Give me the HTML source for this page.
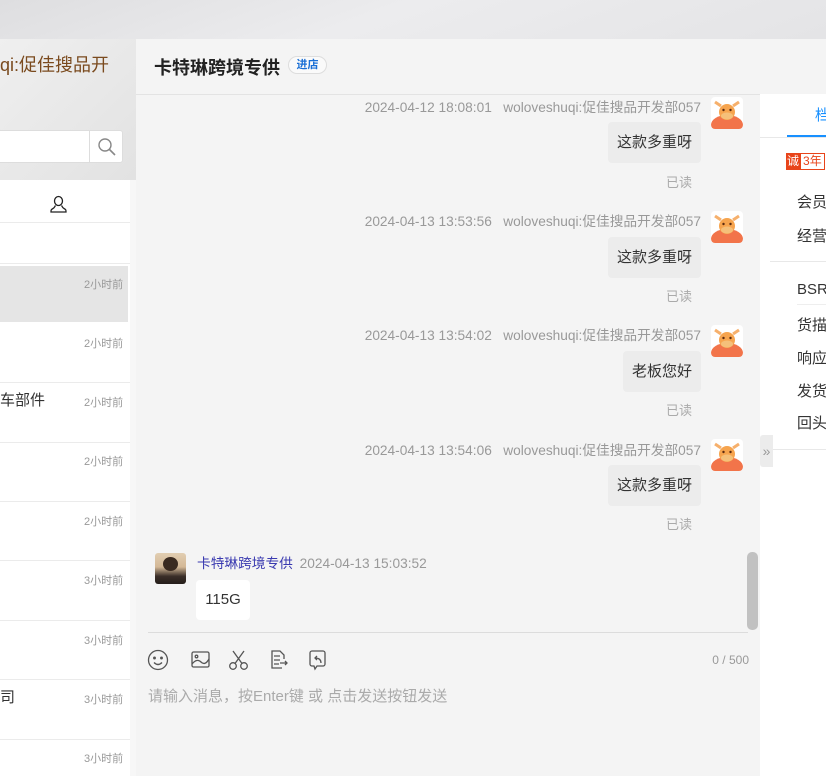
<!DOCTYPE html>
<html><head><meta charset="utf-8"><style>
*{margin:0;padding:0;box-sizing:border-box}
body{width:826px;height:776px;overflow:hidden;position:relative;font-family:"Liberation Sans","Noto Sans CJK SC",sans-serif;background:#e6e6e8}
.a{position:absolute}
.top{left:0;top:0;width:826px;height:39px;background:linear-gradient(160deg,#dedee0 0%,#ececee 45%,#e4e4e6 100%)}
.lh{left:0;top:39px;width:136px;height:141px;background:linear-gradient(135deg,#efefef,#e2e2e2)}
.list{left:0;top:180px;width:136px;height:596px;background:#fff}
.t{font-size:11px;color:#999;right:12px}
.sep{left:0;width:130px;height:1px;background:#ebebeb}
.chat{left:136px;top:39px;width:690px;height:737px;background:#f4f4f4}
.ts{font-size:13.7px;color:#999;right:125px;white-space:nowrap}
.av{width:32px;height:32px;left:711px;border-radius:4px;background:#fff;overflow:hidden}
.bub{background:#ececec;border-radius:4px;font-size:15px;color:#333;height:41px;line-height:41px;padding:0 9px;right:125px}
.rd{font-size:13px;color:#aaa;right:134px}
.rp{left:760px;top:94px;width:66px;height:682px;background:#fff;overflow:hidden}
.rt{font-size:15px;color:#333;left:797px;white-space:nowrap}
</style></head><body>
<div class="a top"></div>
<div class="a lh"></div>
<div class="a" style="left:0;top:51px;font-size:18px;color:#7a4a1e;white-space:nowrap">qi:促佳搜品开</div>
<div class="a" style="left:0;top:130px;width:123px;height:33px;background:#fff;border:1px solid #ddd;border-left:none;border-radius:0 3px 3px 0"></div>
<div class="a" style="left:89px;top:130px;width:1px;height:33px;background:#ddd"></div>
<svg class="a" style="left:97px;top:137px" width="20" height="20" viewBox="0 0 20 20"><circle cx="8" cy="8" r="6" fill="none" stroke="#888" stroke-width="1.4"/><path d="M12.5 12.5L18 18" stroke="#888" stroke-width="1.6"/></svg>
<div class="a list"></div>
<svg class="a" style="left:50px;top:195px" width="17" height="19" viewBox="0 0 17 19"><path d="M8.5 1.5a4 4.5 0 1 1 0 9a4 4.5 0 1 1 0-9zM5.5 10.5c-1 1-.5 2-2.5 3s-2 1.5-2 3.5h15c0-2 0-2.5-2-3.5s-1.5-2-2.5-3" fill="none" stroke="#222" stroke-width="1.3"/></svg>
<div class="a sep" style="top:222px"></div>
<div class="a t" style="top:212px;color:#bbb;height:10px;overflow:hidden">1小时前</div>
<div class="a" style="left:130px;top:244px;width:5px;height:15px;background:#ddd;border-radius:3px"></div>
<div class="a sep" style="top:263px"></div>
<div class="a" style="left:0;top:266px;width:128px;height:56px;background:#e5e5e5"></div>
<div class="a t" style="top:276px;left:84px">2小时前</div>
<div class="a t" style="top:335px;left:84px">2小时前</div>
<div class="a sep" style="top:382px"></div>
<div class="a" style="left:0;top:389px;font-size:15px;color:#333">车部件</div>
<div class="a t" style="top:394px;left:84px">2小时前</div>
<div class="a sep" style="top:442px"></div>
<div class="a t" style="top:453px;left:84px">2小时前</div>
<div class="a sep" style="top:501px"></div>
<div class="a t" style="top:513px;left:84px">2小时前</div>
<div class="a sep" style="top:560px"></div>
<div class="a t" style="top:572px;left:84px">3小时前</div>
<div class="a sep" style="top:620px"></div>
<div class="a t" style="top:632px;left:84px">3小时前</div>
<div class="a sep" style="top:679px"></div>
<div class="a" style="left:0;top:686px;font-size:15px;color:#333">司</div>
<div class="a t" style="top:691px;left:84px">3小时前</div>
<div class="a sep" style="top:739px"></div>
<div class="a t" style="top:750px;left:84px">3小时前</div>
<div class="a" style="left:130px;top:180px;width:6px;height:596px;background:#f7f7f7"></div>

<div class="a chat"></div>
<div class="a" style="left:136px;top:94px;width:690px;height:1px;background:#e3e3e3"></div>
<div class="a" style="left:154px;top:54px;font-size:18px;font-weight:bold;color:#222">卡特琳跨境专供</div>
<div class="a" style="left:288px;top:56px;width:39px;height:18px;border:1px solid #ddd;border-radius:9px;background:#fafafa;font-size:11px;color:#1a6fd6;text-align:center;line-height:16px;font-weight:bold">进店</div>

<div class="a ts" style="top:96px">2024-04-12 18:08:01&nbsp;&nbsp; woloveshuqi:促佳搜品开发部057</div>
<div class="a ts" style="top:210px">2024-04-13 13:53:56&nbsp;&nbsp; woloveshuqi:促佳搜品开发部057</div>
<div class="a ts" style="top:324px">2024-04-13 13:54:02&nbsp;&nbsp; woloveshuqi:促佳搜品开发部057</div>
<div class="a ts" style="top:439px">2024-04-13 13:54:06&nbsp;&nbsp; woloveshuqi:促佳搜品开发部057</div>

<svg width="0" height="0"><defs><g id="cow"><ellipse cx="16" cy="28" rx="16" ry="10" fill="#f2744a"/><path d="M4 5l6 4M28 5l-6 4" stroke="#f6b06c" stroke-width="3"/><ellipse cx="16" cy="15" rx="8" ry="8" fill="#f6a44e"/><ellipse cx="16" cy="19" rx="6" ry="3.5" fill="#f5c07a"/><circle cx="12.5" cy="13" r="1.2" fill="#5a2a10"/><circle cx="19.5" cy="13" r="1.2" fill="#5a2a10"/></g></defs></svg>
<svg class="a av" style="top:97px" viewBox="0 0 32 32"><use href="#cow"/></svg>
<svg class="a av" style="top:211px" viewBox="0 0 32 32"><use href="#cow"/></svg>
<svg class="a av" style="top:325px" viewBox="0 0 32 32"><use href="#cow"/></svg>
<svg class="a av" style="top:439px" viewBox="0 0 32 32"><use href="#cow"/></svg>

<div class="a bub" style="top:122px">这款多重呀</div>
<div class="a rd" style="top:172px">已读</div>
<div class="a bub" style="top:237px">这款多重呀</div>
<div class="a rd" style="top:286px">已读</div>
<div class="a bub" style="top:351px">老板您好</div>
<div class="a rd" style="top:400px">已读</div>
<div class="a bub" style="top:465px">这款多重呀</div>
<div class="a rd" style="top:514px">已读</div>

<div class="a" style="left:155px;top:553px;width:31px;height:31px;border-radius:3px;background:linear-gradient(180deg,#e2ceb2 0%,#d4b896 45%,#3a2e28 75%,#241d1a 100%)"></div>
<div class="a" style="left:163px;top:557px;width:15px;height:14px;border-radius:50%;background:#3a2a20"></div>
<div class="a" style="left:197px;top:552px;font-size:13.7px;color:#3a3ab0;white-space:nowrap">卡特琳跨境专供 <span style="color:#999;margin-left:3px">2024-04-13 15:03:52</span></div>
<div class="a" style="left:196px;top:580px;width:54px;height:40px;background:#fff;border-radius:4px;font-size:15px;color:#333;line-height:40px;text-align:center">115G</div>
<div class="a" style="left:747px;top:552px;width:11px;height:78px;background:#c1c1c1;border-radius:5px"></div>
<div class="a" style="left:148px;top:632px;width:600px;height:1px;background:#dcdcdc"></div>

<svg class="a" style="left:147px;top:649px" width="200" height="24" viewBox="0 0 200 24" fill="none" stroke="#555" stroke-width="1.3">
<circle cx="11" cy="11" r="9.5"/><circle cx="7.5" cy="9" r=".8" fill="#555"/><circle cx="14.5" cy="9" r=".8" fill="#555"/><path d="M7 13.5q4 4 8 0"/>
<rect x="45" y="3" width="17" height="15" rx="1.5"/><circle cx="49.5" cy="7.5" r="1.3"/><path d="M45 15q5-6 9-2t8-3"/>
<circle cx="86" cy="17" r="3.3"/><circle cx="97" cy="17" r="3.3"/><path d="M88 14.5L97 2M95 14.5L86 2"/>
<path d="M135 19h-10V2h8l4 4v4M127 7h6M127 11h6M127 15h5M133 14h7M138 12l2 2-2 2"/>
<path d="M168 2h8a2 2 0 0 1 2 2v11a2 2 0 0 1-2 2h-6l-2 3-1-3h-2a2 2 0 0 1-2-2V4a2 2 0 0 1 2-2zM170 7l-2 2 2 2M168 9q6 0 6 5"/>
</svg>
<div class="a" style="left:700px;top:653px;font-size:12px;color:#999;width:49px;text-align:right">0 / 500</div>
<div class="a" style="left:148px;top:685px;font-size:15px;color:#aaa;white-space:nowrap">请输入消息，按Enter键 或 点击发送按钮发送</div>

<div class="a rp"></div>
<div class="a" style="left:760px;top:137px;width:66px;height:1px;background:#e8e8e8"></div>
<div class="a" style="left:815px;top:104px;font-size:15px;color:#1890ff">档</div>
<div class="a" style="left:787px;top:135px;width:39px;height:2px;background:#1890ff"></div>
<div class="a" style="left:786px;top:153px;height:17px;font-size:12px;line-height:15px;white-space:nowrap"><span style="display:inline-block;background:#e8441a;color:#fff;padding:0 1px;height:17px;line-height:17px">诚</span><span style="display:inline-block;border:1px solid #e8441a;color:#e8441a;padding:0 2px;height:17px;line-height:15px">3年</span></div>
<div class="a rt" style="top:191px">会员</div>
<div class="a rt" style="top:225px">经营</div>
<div class="a" style="left:770px;top:261px;width:56px;height:1px;background:#e8e8e8"></div>
<div class="a rt" style="top:281px">BSR-</div>
<div class="a" style="left:797px;top:304px;width:29px;height:1px;background:#eee"></div>
<div class="a rt" style="top:314px">货描</div>
<div class="a rt" style="top:347px">响应</div>
<div class="a rt" style="top:380px">发货</div>
<div class="a rt" style="top:412px">回头</div>
<div class="a" style="left:773px;top:449px;width:53px;height:1px;background:#e8e8e8"></div>
<div class="a" style="left:760px;top:435px;width:13px;height:32px;background:#ececec;border-radius:3px 0 0 3px;color:#999;font-size:14px;line-height:32px;text-align:center">»</div>
</body></html>
